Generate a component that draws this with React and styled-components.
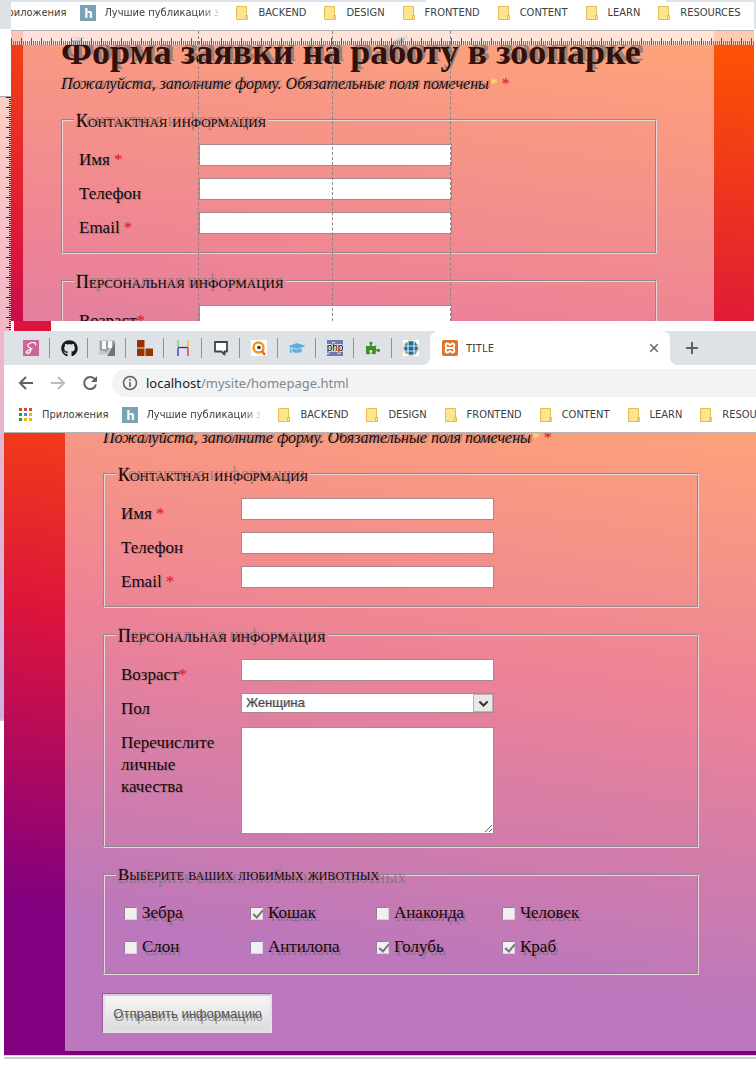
import React, { useId } from "react";
import styled, { createGlobalStyle, css } from "styled-components";
import { FaGithub, FaPuzzlePiece, FaGraduationCap } from "react-icons/fa";

const serif = '"Palatino Linotype", "Liberation Serif", serif';
const ui = '"Noto Sans", "Liberation Sans", sans-serif';
const uiCondensed = '"DejaVu Sans Condensed", "Noto Sans", sans-serif';

const GlobalStyle = createGlobalStyle`
  * { box-sizing: border-box; }
  body { margin: 0; background: #fff; }
`;

/* ---------- window frames ---------- */

const Screen = styled.div`
  display: flex;
  flex-direction: column;
  overflow: hidden;
`;

const BackWindow = styled.section`
  display: grid;
  grid-template-columns: 11px minmax(0, 1fr) 2px;
`;

const FrontWindow = styled.section`
  display: grid;
  grid-template-columns: 4px minmax(0, 1fr);
`;

const BackEdge = styled.div`
  display: flex;
  flex-direction: column;
`;

const EdgeCap = styled.div`
  height: 29px;
  background: #dee1e6;
`;

const EdgeGap = styled.div`
  height: 68px;
  border-bottom: 1px solid #a9a9a9;
`;

const VerticalRuler = styled.div`
  flex: 1;
  background:
    repeating-linear-gradient(to bottom, #222 0 1px, transparent 1px 10px) right top / 5px 100% no-repeat,
    repeating-linear-gradient(to bottom, #333 0 1px, transparent 1px 2px) right top / 2px 100% no-repeat,
    linear-gradient(#fccfc4, #f2b6c8);
`;

const FrontEdge = styled.div`
  height: 390px;
  background: linear-gradient(#f0b6ca, #cdb4e0);
  border-bottom: 2px solid #ccc;
`;

const WindowMain = styled.div`
  min-width: 0;
`;

const TopStrip = styled.div`
  height: 2px;
  background: linear-gradient(to right, #dee1e6 415px, #fff 415px 655px, #dee1e6 655px);
`;

const UnderStrip = styled.div`
  height: 10px;
  border-left: 3px solid #fff;
  background: linear-gradient(#dc143c, #dc143c) left / 37px 100% no-repeat #fff;
`;

const Shadow = styled.div`
  height: 4px;
  margin-bottom: 28px;
  border-top: 1px solid #e8cbe8;
  border-bottom: 2px solid #cfcfc8;
`;

/* ---------- browser chrome ---------- */

const TabStrip = styled.div`
  display: flex;
  height: 34px;
  padding-left: 8px;
  background: #dee1e6;
`;

const PinnedTab = styled.button`
  display: flex;
  flex: none;
  align-items: center;
  justify-content: center;
  width: 38px;
  padding: 0;
  border: 0;
  background: ${(p) => (p.$last ? "none" : "linear-gradient(#8d9095, #8d9095) right center / 1px 20px no-repeat")};
`;

const ActiveTab = styled.div`
  position: relative;
  display: flex;
  flex: none;
  align-items: center;
  gap: 8px;
  width: 240px;
  padding: 0 10px 0 12px;
  border-radius: 8px 8px 0 0;
  background: #fff;
  color: #3c4043;
  &::before, &::after {
    content: "";
    position: absolute;
    bottom: 0;
    width: 8px;
    height: 8px;
  }
  &::before { left: -8px; background: radial-gradient(circle at 0 0, #dee1e6 8px, #fff 8px); }
  &::after { right: -8px; background: radial-gradient(circle at 100% 0, #dee1e6 8px, #fff 8px); }
`;

const TabTitle = styled.span`
  flex: 1;
  font: 11px/16px ${ui};
`;

const IconButton = styled.button`
  display: flex;
  flex: none;
  align-items: center;
  justify-content: center;
  width: ${(p) => p.$width || 32}px;
  padding: 0;
  border: 0;
  background: none;
  color: ${(p) => (p.$dim ? "#babcbe" : "#5f6368")};
`;

const AddressRow = styled.div`
  display: flex;
  align-items: center;
  height: 36px;
  padding-left: 6px;
  background: #fff;
`;

const AddressBar = styled.div`
  display: flex;
  flex: 1;
  align-items: center;
  gap: 8px;
  height: 28px;
  margin-left: 6px;
  padding-left: 10px;
  border-radius: 14px 0 0 14px;
  background: #f1f3f4;
`;

const Address = styled.span`
  font: 13px/20px ${ui};
  color: #80868b;
  strong { font-weight: 400; color: #202124; }
`;

const BookmarkBar = styled.nav`
  display: flex;
  align-items: center;
  height: ${(p) => (p.$back ? 29 : 32)}px;
  padding: ${(p) => (p.$back ? "0 0 6px 14px" : "0 0 4px 14px")};
  overflow: hidden;
  border-bottom: 1px solid #b3b3b3;
  background: #fff;
`;

const BookmarkList = styled.div`
  display: flex;
  flex: none;
  align-items: center;
  gap: 18px;
  margin-left: ${(p) => (p.$back ? -49 : 0)}px;
`;

const Bookmark = styled.a`
  display: flex;
  flex: none;
  align-items: center;
  gap: ${(p) => p.$gap || 10}px;
  font: 11px/16px ${uiCondensed};
  color: #3c4043;
  text-decoration: none;
  white-space: nowrap;
`;

const AppsBookmark = styled(Bookmark)`
  margin-right: -4px;
`;

const FadedLabel = styled.span`
  width: 114px;
  overflow: hidden;
  mask-image: linear-gradient(to right, #000 96px, transparent 120px);
`;

const HBadge = styled.span`
  display: grid;
  place-items: center;
  width: 16px;
  height: 16px;
  background: #7aa2b5;
  color: #fff;
  font: bold 13px/16px "Open Sans", sans-serif;
`;

/* ---------- the zoo page ---------- */

const Viewport = styled.div`
  position: relative;
  overflow: hidden;
  ${(p) => p.$back
    ? css`
        height: 290px;
        padding: 0 40px 0 12px;
        background: linear-gradient(188deg, #ff5600, #dc143c 325px, #800080 616px);
      `
    : css`
        padding: 0 0 4px 61px;
        background: linear-gradient(188deg, #fc5005, #dc143c 277px, #800080 570px);
      `}
`;

const Sheet = styled.main`
  padding: 0 38px 18px;
  background: rgba(255, 255, 255, 0.47);
  font: 17px/22px ${serif};
  color: #1a0505;
`;

const Title = styled.h1`
  margin: 0;
  font-size: 36px;
  line-height: 42px;
  font-weight: 700;
  white-space: nowrap;
  color: #33100a;
  text-shadow: 3px -3px 0 rgba(110, 115, 115, 0.7);
`;

const Lead = styled.p`
  margin: ${(p) => (p.$clipped ? "-6px" : "0")} 0 15px;
  font-size: 16px;
  line-height: 22px;
  font-style: italic;
  white-space: nowrap;
  text-shadow: 2px -1px 0 rgba(120, 115, 115, 0.6);
`;

const Required = styled.span`
  color: #d8141c;
  text-shadow: none;
`;

const Spark = styled.span`
  margin-right: 4px;
  color: #ffe066;
  text-shadow: none;
`;

const Group = styled.fieldset`
  max-width: 596px;
  min-width: 0;
  margin: 0 0 17px;
  padding: ${(p) => (p.$tight ? "11px 15px 9px" : "14px 15px 6px")};
  border: 2px groove #e2d8da;
`;

const Legend = styled.legend`
  position: relative;
  z-index: 0;
  height: 20px;
  margin-left: -4px;
  padding: 0 2px;
  font-size: ${(p) => (p.$long ? 17 : 18)}px;
  font-variant: small-caps;
  line-height: ${(p) => (p.$long ? 20 : 22)}px;
  white-space: nowrap;
  &::after {
    content: attr(data-echo);
    position: absolute;
    z-index: -1;
    left: 1px;
    top: ${(p) => (p.$long ? 2 : -1)}px;
    font-variant: normal;
    font-size: 18px;
    color: rgba(110, 115, 115, 0.65);
  }
`;

const Field = styled.div`
  display: grid;
  grid-template-columns: 120px 253px;
  align-items: start;
  min-height: ${(p) => (p.$tall ? 113 : 34)}px;
  padding-left: 1px;
`;

const Label = styled.label`
  padding-top: 5px;
  text-shadow: 1px 1px 0 rgba(110, 110, 115, 0.5);
`;

const controlFrame = css`
  display: block;
  width: 100%;
  border: 1px solid #a5898d;
  border-radius: 0;
  background: #fff;
  outline: 0;
`;

const TextInput = styled.input`
  ${controlFrame}
  height: 22px;
  padding: 2px 4px;
  font: 13px/16px "Liberation Sans", sans-serif;
`;

const TextArea = styled.textarea`
  ${controlFrame}
  height: 107px;
  padding: 4px;
  font: 13px/16px "Liberation Sans", sans-serif;
`;

const SelectBox = styled.div`
  position: relative;
`;

const Select = styled.select`
  ${controlFrame}
  appearance: none;
  height: 20px;
  padding: 0 4px;
  font: 13px/18px "Liberation Sans", sans-serif;
  color: #444;
  text-shadow: 1px 0 0 rgba(90, 90, 120, 0.4);
`;

const SelectArrow = styled.span`
  position: absolute;
  top: 1px;
  right: 1px;
  display: grid;
  place-items: center;
  width: 20px;
  height: 18px;
  border: 1px solid #b5b5b5;
  background: #e8e8e8;
  color: #333;
  pointer-events: none;
`;

const Animals = styled.div`
  display: grid;
  grid-template-columns: repeat(4, 126px);
  grid-auto-rows: 34px;
  padding-left: 4px;
`;

const Animal = styled.label`
  display: flex;
  align-items: center;
  gap: 5px;
  text-shadow: 2px 3px 0 rgba(110, 105, 120, 0.65);
`;

const Checkbox = styled.input`
  appearance: none;
  position: relative;
  width: 13px;
  height: 13px;
  margin: 0;
  border: 1px solid #96799a;
  border-right-color: #d7cfd9;
  border-bottom-color: #d7cfd9;
  background: #f0f0f0;
  &:checked::after {
    content: "";
    position: absolute;
    left: 4px;
    top: 0;
    width: 4px;
    height: 8px;
    border: solid #777;
    border-width: 0 2px 2px 0;
    transform: rotate(40deg);
  }
`;

const Submit = styled.button`
  display: block;
  width: 169px;
  height: 39px;
  margin: 19px 0 0;
  padding: 0;
  border: 2px solid #e6e0e6;
  border-top-color: #d5c9d6;
  border-radius: 0;
  background: linear-gradient(#f5f5f5, #dcdcdc);
  box-shadow: -1px -1px 0 #965a9b;
  font: 13px/20px "Liberation Sans", sans-serif;
  color: #555;
  text-shadow: 1px 3px 0 rgba(90, 90, 90, 0.6);
  white-space: nowrap;
`;

const HorizontalRuler = styled.div`
  position: absolute;
  inset: 0 0 auto;
  height: 14px;
  background:
    repeating-linear-gradient(to right, #555 0 1px, transparent 1px 10px) left bottom / 100% 7px no-repeat,
    repeating-linear-gradient(to right, #777 0 1px, transparent 1px 2px) left bottom / 100% 4px no-repeat,
    rgba(255, 255, 255, 0.7);
`;

const Guide = styled.i`
  position: absolute;
  top: 0;
  bottom: 0;
  left: ${(p) => p.$x}px;
  border-left: 1px dashed #8b8585;
`;

/* ---------- icons ---------- */

const FolderIcon = () => (
  <svg width="12" height="14" viewBox="0 0 12 14" aria-hidden="true">
    <path d="M.5.5h10v9h1v4H.5z" fill="#fde58f" stroke="#e3bd50" />
    <path d="M9.5 13.5v-4h2" fill="none" stroke="#e3bd50" />
  </svg>
);

const AppsIcon = () => {
  const colors = ["#db4437", "#db4437", "#db4437", "#0f9d58", "#4285f4", "#f4b400", "#0f9d58", "#f4b400", "#f4b400"];
  return (
    <svg width="14" height="14" aria-hidden="true">
      {colors.map((c, i) => (
        <rect key={i} x={(i % 3) * 5 + 1} y={Math.floor(i / 3) * 5} width="3" height="3" fill={c} />
      ))}
    </svg>
  );
};

const Stroke = ({ d, size = 16, width = 2 }) => (
  <svg width={size} height={size} viewBox="0 0 16 16" fill="none" stroke="currentColor" strokeWidth={width} aria-hidden="true">
    <path d={d} />
  </svg>
);

const Svg16 = ({ children }) => (
  <svg width="16" height="16" viewBox="0 0 16 16" aria-hidden="true">{children}</svg>
);

const pinned = [
  ["Sass", <Svg16><rect width="16" height="16" fill="#cf649a" /><path d="M12.500 5C13.500 2 9 2 6.500 3.500C4 5 4.500 6.500 6.500 7.500C9 8.800 8 11 6.500 12.500C5 14 2.800 13.500 3.300 12C4 10.200 7 9.500 9 8.500" fill="none" stroke="#fff" strokeWidth="1.200" strokeLinecap="round" /></Svg16>],
  ["GitHub", <FaGithub size={17} color="#15181c" />],
  ["Панели", <Svg16><path d="M0 0h16v10l-6 4-10 1z" fill="#c3c7ca" /><path d="M1 1h14v3l-8 8-6-2z" fill="#9ba0a4" /><path d="M3 1h4v8H3zM9 1h4v7H9z" fill="#fafafa" /><path d="M10 13l6-11v14H8z" fill="#70757a" /></Svg16>],
  ["Блоки", <Svg16><path d="M0 0h7.500v7.500H0zM0 8.500h7.500V16H0zM8.500 8.500H16V16H8.500z" fill="#993300" /></Svg16>],
  ["Линии", <Svg16><path d="M3 0v7" stroke="#63d94b" strokeWidth="1.300" /><path d="M3 8v8" stroke="#3529d6" strokeWidth="1.300" /><path d="M13 0v7" stroke="#f0b51b" strokeWidth="1.300" /><path d="M13 8v8" stroke="#d12b43" strokeWidth="1.300" /><path d="M3 7.500h10" stroke="#7d1470" strokeWidth="1.300" /></Svg16>],
  ["Чат", <Svg16><path d="M2 2h12v9.500h-2.500v3l-3-3H2z" fill="#fff" stroke="#444" strokeWidth="1.800" strokeLinejoin="round" /></Svg16>],
  ["Поиск", <Svg16><rect width="16" height="16" fill="#fff" /><circle cx="7.500" cy="7.500" r="5" fill="none" stroke="#f7941d" strokeWidth="2.500" /><circle cx="8" cy="7.500" r="1.800" fill="#333" /><path d="M11 11l3 4" stroke="#f26522" strokeWidth="2.500" /></Svg16>],
  ["Обучение", <FaGraduationCap size={16} color="#5eaee3" />],
  ["PHP", <Svg16><rect width="16" height="16" fill="#7377b7" /><text x="8" y="11" textAnchor="middle" fontFamily="Liberation Sans" fontSize="10" fill="#000" stroke="#fff" strokeWidth="1.500" paintOrder="stroke">php</text></Svg16>],
  ["Расширение", <FaPuzzlePiece size={14} color="#3f9222" />],
  ["Глобус", <Svg16><rect width="16" height="16" fill="#fff" /><circle cx="8" cy="8" r="7" fill="#1769a5" stroke="#d9a24b" strokeWidth="1.500" strokeDasharray="3 2" /><path d="M5 2v12M11 2v12M1 6h14M1 11h14" stroke="#d8e8f2" strokeWidth="1.200" /></Svg16>],
];

const XamppIcon = () => (
  <Svg16>
    <rect width="16" height="16" rx="2" fill="#e2712b" />
    <path d="M5 8H10.500M5.500 8C3 7.500 3 3.500 5.500 3.500C7 3.500 7 5 8 5C9 5 9 3.500 10.500 3.500C13 3.500 13 7.500 10.500 8C13 8.500 13 12.500 10.500 12.500C9 12.500 9 11 8 11C7 11 7 12.500 5.500 12.500C3 12.500 3 8.500 5.500 8z" fill="none" stroke="#fff" strokeWidth="1.800" strokeLinejoin="round" />
  </Svg16>
);

const folders = ["BACKEND", "DESIGN", "FRONTEND", "CONTENT", "LEARN", "RESOURCES"];

const Bookmarks = ({ back }) => (
  <BookmarkBar $back={back}>
    <BookmarkList $back={back}>
      <AppsBookmark href="#apps"><AppsIcon />Приложения</AppsBookmark>
      <Bookmark href="#best" $gap={8}><HBadge>h</HBadge><FadedLabel>Лучшие публикации за</FadedLabel></Bookmark>
      {folders.map((name) => (
        <Bookmark key={name} href={`#${name.toLowerCase()}`}><FolderIcon />{name}</Bookmark>
      ))}
    </BookmarkList>
  </BookmarkBar>
);

const TextField = ({ label, star, spaced }) => {
  const id = useId();
  return (
    <Field>
      <Label htmlFor={id}>{label}{spaced && " "}{star && <Required>*</Required>}</Label>
      <TextInput id={id} type="text" />
    </Field>
  );
};

const animals = [
  ["Зебра", false], ["Кошак", true], ["Анаконда", false], ["Человек", false],
  ["Слон", false], ["Антилопа", false], ["Голубь", true], ["Краб", true],
];

const ZooForm = ({ back }) => {
  const id = useId();
  return (
    <Sheet as={back ? "div" : "main"}>
      {back && <Title>Форма заявки на работу в зоопарке</Title>}
      <Lead $clipped={!back}>
        Пожалуйста, заполните форму. Обязательные поля помечены<Spark>*</Spark><Required>*</Required>
      </Lead>
      <Group>
        <Legend data-echo="Контактная информация">Контактная информация</Legend>
        <TextField label="Имя" star spaced />
        <TextField label="Телефон" />
        <TextField label="Email" star spaced />
      </Group>
      <Group>
        <Legend data-echo="Персональная информация">Персональная информация</Legend>
        <TextField label="Возраст" star />
        {!back && (
          <>
            <Field>
              <Label htmlFor={`${id}-sex`}>Пол</Label>
              <SelectBox>
                <Select id={`${id}-sex`} defaultValue="f">
                  <option value="f">Женщина</option>
                  <option value="m">Мужчина</option>
                </Select>
                <SelectArrow><Stroke size={11} width={3} d="M2 5l6 6 6-6" /></SelectArrow>
              </SelectBox>
            </Field>
            <Field $tall>
              <Label htmlFor={`${id}-traits`}>Перечислите личные качества</Label>
              <TextArea id={`${id}-traits`} />
            </Field>
          </>
        )}
      </Group>
      {!back && (
        <>
          <Group $tight>
            <Legend $long data-echo="Выберите ваших любимых животных">Выберите ваших любимых животных</Legend>
            <Animals>
              {animals.map(([name, on]) => (
                <Animal key={name}><Checkbox type="checkbox" defaultChecked={on} />{name}</Animal>
              ))}
            </Animals>
          </Group>
          <Submit type="button">Отправить информацию</Submit>
        </>
      )}
    </Sheet>
  );
};

export default function App() {
  return (
    <Screen>
      <GlobalStyle />
      <BackWindow>
        <BackEdge><EdgeCap /><EdgeGap /><VerticalRuler /></BackEdge>
        <WindowMain>
          <TopStrip />
          <Bookmarks back />
          <Viewport $back>
            <ZooForm back />
            <HorizontalRuler />
            <Guide $x={187} />
            <Guide $x={321} />
            <Guide $x={439} />
          </Viewport>
          <UnderStrip />
        </WindowMain>
        <BackEdge><EdgeCap /></BackEdge>
      </BackWindow>
      <FrontWindow>
        <FrontEdge />
        <WindowMain>
          <TabStrip>
            {pinned.map(([name, icon], i) => (
              <PinnedTab key={name} type="button" aria-label={name} $last={i === pinned.length - 1}>{icon}</PinnedTab>
            ))}
            <ActiveTab>
              <XamppIcon />
              <TabTitle>TITLE</TabTitle>
              <IconButton type="button" aria-label="Закрыть вкладку" $width={12}><Stroke size={12} d="M3 3l10 10M13 3L3 13" /></IconButton>
            </ActiveTab>
            <IconButton type="button" aria-label="Новая вкладка" $width={44}><Stroke d="M8 2v12M2 8h12" /></IconButton>
          </TabStrip>
          <AddressRow>
            <IconButton type="button" aria-label="Назад"><Stroke d="M15 8H2M8 2L2 8l6 6" /></IconButton>
            <IconButton type="button" aria-label="Вперёд" $dim><Stroke d="M1 8h13M8 2l6 6-6 6" /></IconButton>
            <IconButton type="button" aria-label="Обновить">
              <Svg16><path d="M13 4.500A6 6 0 1 0 14 9.500" fill="none" stroke="#5f6368" strokeWidth="2" /><path d="M15 1v6H9z" fill="#5f6368" /></Svg16>
            </IconButton>
            <AddressBar>
              <Svg16><circle cx="8" cy="8" r="6.500" fill="none" stroke="#5f6368" strokeWidth="1.500" /><path d="M8 7v5M8 4v1.800" stroke="#5f6368" strokeWidth="1.600" /></Svg16>
              <Address><strong>localhost</strong>/mysite/homepage.html</Address>
            </AddressBar>
          </AddressRow>
          <Bookmarks />
          <Viewport>
            <ZooForm />
          </Viewport>
          <Shadow />
        </WindowMain>
      </FrontWindow>
    </Screen>
  );
}
